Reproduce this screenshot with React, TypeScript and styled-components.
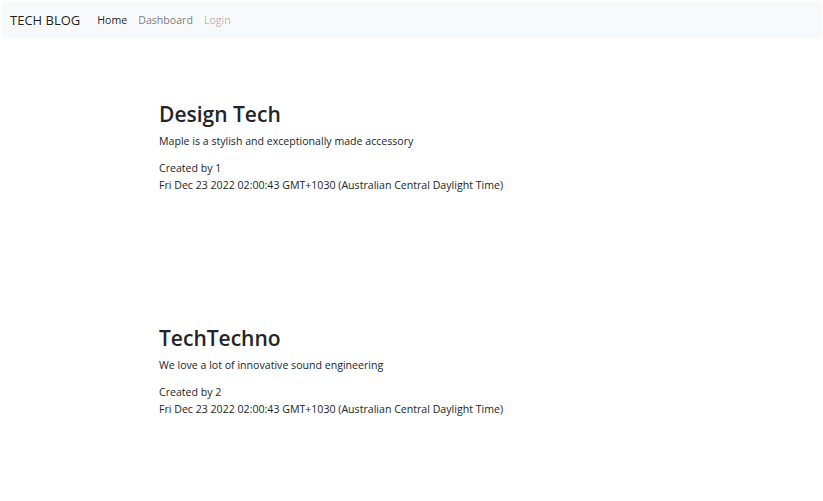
import React from 'react'
import styled, { createGlobalStyle } from 'styled-components'

const GlobalStyle = createGlobalStyle`
  body {
    margin: 0;
    background: #fff;
    color: #212529;
    font-family: "Open Sans", "Noto Sans", sans-serif;
  }
`;

const Page = styled.div`
  padding: 1px 1px 0 2px;
`;

const Navbar = styled.nav`
  display: flex;
  align-items: center;
  height: 38px;
  padding: 0 8px;
  background: #f8f9fa;
`;

const Brand = styled.span`
  font-size: 13px;
  color: rgba(0, 0, 0, 0.9);
  margin-right: 17px;
`;

const NavLink = styled.a<{ state: 'active' | 'normal' | 'disabled' }>`
  font-size: 10.6px;
  margin-right: 11px;
  text-decoration: none;
  color: ${(p) =>
    p.state === 'active'
      ? 'rgba(0, 0, 0, 0.9)'
      : p.state === 'disabled'
      ? 'rgba(0, 0, 0, 0.3)'
      : 'rgba(0, 0, 0, 0.55)'};
`;

const Main = styled.main`
  display: flex;
  flex-direction: column;
  gap: 131px;
  padding: 62px 0 0 157px;
`;

const Post = styled.article`
  display: flex;
  flex-direction: column;
`;

const Title = styled.h2`
  margin: 0 0 5px;
  font-size: 21px;
  font-weight: 600;
  line-height: 27px;
`;

const Text = styled.p<{ gap?: number }>`
  margin: 0 0 ${(p) => p.gap ?? 0}px;
  font-size: 10.6px;
  line-height: 17px;
`;

const posts = [
  {
    title: 'Design Tech',
    body: 'Maple is a stylish and exceptionally made accessory',
    user: 1,
  },
  {
    title: 'TechTechno',
    body: 'We love a lot of innovative sound engineering',
    user: 2,
  },
];

const date = 'Fri Dec 23 2022 02:00:43 GMT+1030 (Australian Central Daylight Time)';

const App: React.FC = () => {
  return (
    <Page>
      <GlobalStyle />
      <Navbar>
        <Brand>TECH BLOG</Brand>
        <NavLink state="active">Home</NavLink>
        <NavLink state="normal">Dashboard</NavLink>
        <NavLink state="disabled">Login</NavLink>
      </Navbar>
      <Main>
        {posts.map((post) => (
          <Post key={post.title}>
            <Title>{post.title}</Title>
            <Text gap={10}>{post.body}</Text>
            <Text>Created by {post.user}</Text>
            <Text>{date}</Text>
          </Post>
        ))}
      </Main>
    </Page>
  );
};

export default App;
